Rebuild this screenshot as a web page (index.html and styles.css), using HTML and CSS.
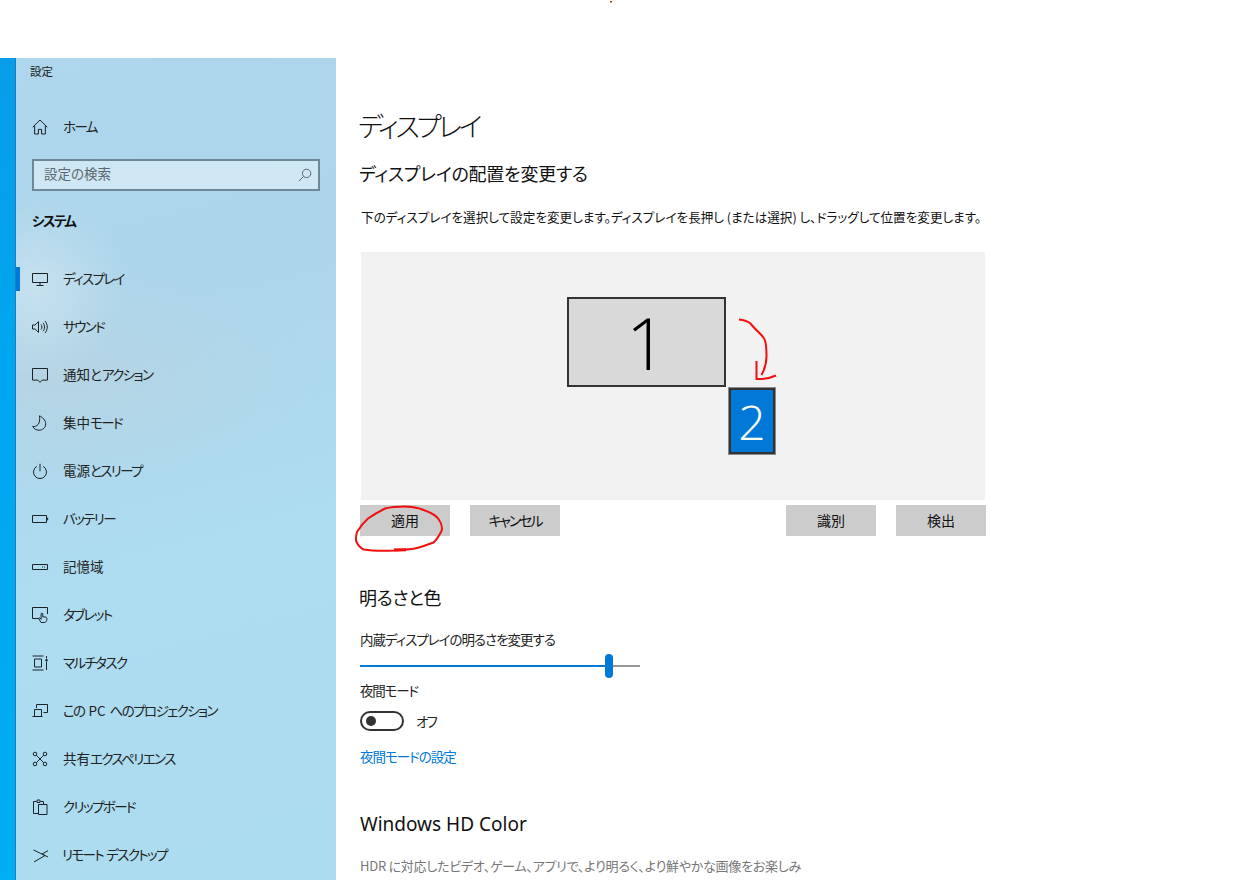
FILE: index.html
```html
<!DOCTYPE html>
<html lang="ja">
<head>
<meta charset="utf-8">
<title>設定</title>
<link rel="stylesheet" href="styles.css">
</head>
<body>
<div class="topgap"></div>
<div class="app">
  <div class="edge"></div>
  <aside class="sidebar">
    <div class="apptitle">設定</div>
    <div class="row home">
      <svg class="ic" viewBox="0 0 16 16"><path d="M.7 8.2 8 1l7.300 7.200M2.600 6.600V15h3.800v-4.600h3.200V15h3.800V6.600"/></svg>
      <span>ホーム</span>
    </div>
    <div class="search"><span>設定の検索</span>
      <svg class="searchic" viewBox="0 0 14 14"><circle cx="8.600" cy="5.400" r="4.200"/><path d="M5.600 8.400.8 13.200"/></svg>
    </div>
    <div class="section">システム</div>
    <nav class="nav">
      <div class="row active"><svg class="ic" viewBox="0 0 16 16"><path d="M.5 2.500h15v9H.5zM8 11.500V14M4.500 14.500h7"/></svg><span>ディスプレイ</span></div>
      <div class="row"><svg class="ic" viewBox="0 0 16 16"><path d="M.5 6h2.600L6.500 2.600v10.800L3.100 10H.5zM9 5.500c1.200 1.400 1.200 3.600 0 5M11 3.800c2 2.400 2 6 0 8.400M13 2c3 3.500 3 8.500 0 12"/></svg><span>サウンド</span></div>
      <div class="row"><svg class="ic" viewBox="0 0 16 16"><path d="M.5 1.500h15v11.600h-5.300L8 15.300l-2.200-2.200H.5z"/></svg><span><span class="k">通知と</span>アクション</span></div>
      <div class="row"><svg class="ic" viewBox="0 0 16 16"><path d="M7.500.8c2.800 1.400 6.200 4.200 6.200 8 0 3.600-3 6.400-6.600 6.400-3 0-5.400-1.500-6.400-3.800 4 .8 8-2.400 6.800-10.600z"/></svg><span><span class="k">集中</span>モード</span></div>
      <div class="row"><svg class="ic" viewBox="0 0 16 16"><path d="M8 .8v7.400M4.800 3.400a6.500 6.500 0 1 0 6.400 0"/></svg><span><span class="k">電源</span>とスリープ</span></div>
      <div class="row"><svg class="ic" viewBox="0 0 16 16"><path d="M.5 4.500h14v7H.5zM14.500 7h1.200v2h-1.200"/></svg><span>バッテリー</span></div>
      <div class="row"><svg class="ic" viewBox="0 0 16 16"><path d="M.5 5.500h15v5H.5zM10 8h1M12 8h1"/></svg><span class="k">記憶域</span></div>
      <div class="row"><svg class="ic" viewBox="0 0 16 16"><path d="M7 11.500H.5v-11h15v6.500M9 15.500 6.800 11.800c-.5-.9.700-1.500 1.300-.7l1 1.200V7c0-1.200 1.700-1.200 1.700 0v3h2.700c.8 0 1.300.6 1.300 1.300v1.400c0 1.500-1 2.800-2.500 2.800z"/></svg><span>タブレット</span></div>
      <div class="row"><svg class="ic" viewBox="0 0 16 16"><path d="M.5 1h11M.5 15h11M2.500 4h7v8h-7zM14.500 1v2.500M14.500 7v8"/><circle class="dot" cx="14.500" cy="5.300" r="1.200"/></svg><span>マルチタスク</span></div>
      <div class="row"><svg class="ic" viewBox="0 0 16 16"><path d="M4.500 5V1.500h11v8h-4M.5 13.500h10M2.500 13.500V6.500h7v7"/></svg><span>この<span class="k pc"> PC </span>へのプロジェクション</span></div>
      <div class="row"><svg class="ic" viewBox="0 0 16 16"><circle cx="3" cy="3" r="1.800"/><circle cx="13" cy="3" r="1.800"/><circle cx="3" cy="13" r="1.800"/><circle cx="13" cy="13" r="1.800"/><path d="m4.300 4.300 7.400 7.400M11.700 4.300l-7.400 7.400"/></svg><span><span class="k">共有</span>エクスペリエンス</span></div>
      <div class="row"><svg class="ic" viewBox="0 0 16 16"><path d="M6 14.500H1.500v-12h3M8.500 2.500h3v3M5 3.500V1h3v2.500zM6.500 5.500h8.500v10H6.500z"/></svg><span>クリップボード</span></div>
      <div class="row remote"><svg class="ic" viewBox="0 0 16 16"><path d="M1.500 3 13 8.500 2 15M16 3.700 10 7l6 3"/></svg><span>リモート<span class="k"> </span>デスクトップ</span></div>
    </nav>
  </aside>
  <main class="main">
    <h1 class="title">ディスプレイ</h1>
    <h2 class="subtitle">ディスプレイの配置を変更する</h2>
    <p class="desc">下のディスプレイを選択して設定を変更します。ディスプレイを長押し (または選択) し、ドラッグして位置を変更します。</p>
    <div class="stage">
      <div class="mon mon1">1</div>
      <div class="mon mon2">2</div>
    </div>
    <div class="buttons">
      <div class="btn">適用</div>
      <div class="btn kana">キャンセル</div>
      <div class="spacer"></div>
      <div class="btn">識別</div>
      <div class="btn">検出</div>
    </div>
    <h2 class="subtitle sub2">明るさと色</h2>
    <div class="label lb1">内蔵ディスプレイの明るさを変更する</div>
    <div class="slider"><div class="fill"></div><div class="thumb"></div><div class="rest"></div></div>
    <div class="label lb2">夜間モード</div>
    <div class="toggleline"><div class="toggle"><div class="knob"></div></div><span>オフ</span></div>
    <a class="link">夜間モードの設定</a>
    <h2 class="hd">Windows HD Color</h2>
    <p class="hdr">HDR に対応したビデオ、ゲーム、アプリで、より明るく、より鮮やかな画像をお楽しみいただけます。</p>
  </main>
</div>
<svg class="ink" viewBox="0 0 1242 880">
  <path d="M610 1h2v1.500h-2z" class="inkdot"/>
  <path d="M739 319.500c4 .5 8 1.500 11 3.500 2.500 3 5 6 8 8.500 3 3.500 6 5.500 7 9 1.500 5 1.500 11 1.500 16 0 6-2 13-5 18.500"/>
  <path d="M756.500 361v18c7 .5 13-.5 19.500-3.500"/>
  <path d="M438.500 519c-3-4-8-6.500-13.500-8.500-6-2.500-13-4-20-4-7 0-14 .5-20 2-6 3-12 6.500-17 10-4.500 4-8 8.500-11 13.500-1 3.500-1.500 7-.5 10 1.500 3 4 6 7 7.500 9 1.500 21 1.500 32 1 7-.5 15-1 21.500-2.500 6-1.500 11-3.500 16.500-5.500 3.500-3 6-7.500 8-11.500 1-3.500 0-8-3-12z"/>
  <path d="M394 549.800h12" class="inkthick"/>
</svg>
</body>
</html>
```
FILE: styles.css
```css
* { box-sizing: border-box; }
html, body { margin: 0; height: 880px; overflow: hidden; background: #fff; }
body {
  position: relative;
  font-family: "Noto Sans CJK JP", "Noto Sans", sans-serif;
  color: #111;
  font-feature-settings: "palt";
}
.topgap { height: 58px; }
.app { display: flex; height: 822px; overflow: hidden; }
.edge {
  width: 16px;
  background: linear-gradient(180deg, #0a9ce8 0%, #00a5ef 35%, #00aef2 100%);
  border-right: 1px solid #1a7fb5;
}
.sidebar {
  width: 320px;
  padding-left: 16px;
  background:
    radial-gradient(circle at 20px 230px, #c6e1ee 0, rgba(198,225,238,0) 90px),
    radial-gradient(ellipse 260px 120px at 50px 320px, rgba(190,210,220,.5) 0, rgba(190,210,220,0) 100%),
    linear-gradient(165deg, #aed6ec 0%, #acd5eb 30%, #aedcf0 60%, #acdcf0 100%);
}
.apptitle { height: 26px; line-height: 26px; font-size: 11.500px; color: #222; margin-left: -2px; }
.row {
  height: 48px;
  display: flex;
  align-items: center;
  gap: 15px;
  font-size: 13.500px;
  color: #222;
  position: relative;
  letter-spacing: -1.600px;
}
.row > span { margin-top: -2px; }
.k { letter-spacing: 0; }
.pc { word-spacing: 1px; }
.home { margin-top: 19px; }
.ic { width: 16px; height: 16px; flex: none; fill: none; stroke: #1c2328; stroke-width: 1; overflow: visible; }
.ic .dot { fill: #1c2328; stroke: none; }
.search {
  width: 288px;
  height: 32px;
  margin-top: 8px;
  border: 2px solid #6d8899;
  background: rgba(255,255,255,.42);
  display: flex;
  align-items: center;
  justify-content: space-between;
  padding: 0 6px 0 10px;
  font-size: 13.500px;
  color: #5b6770;
}
.search span { margin-top: -5px; }
.searchic { width: 14px; height: 14px; fill: none; stroke: #5b6770; stroke-width: 1; }
.section { height: 44px; line-height: 42px; margin-top: 8px; font-size: 13.500px; font-weight: 700; color: #111; letter-spacing: -1.600px; }
.nav { margin-top: 12px; }
.active::before {
  content: "";
  position: absolute;
  left: -16px;
  top: 12px;
  width: 4px;
  height: 24px;
  background: #0078d7;
}
.remote { gap: 14px; }
.main { flex: 1; padding-left: 24px; }
.title { margin: 46px 0 0 -2px; height: 44px; line-height: 44px; font-size: 27px; font-weight: 300; color: #111; letter-spacing: -3.300px; }
.subtitle { margin: 12px 0 0 -1px; height: 28px; line-height: 26px; font-size: 18px; font-weight: 400; color: #111; letter-spacing: -.250px; }
.desc { margin: 19px 0 0 1px; height: 20px; line-height: 20px; font-size: 12.600px; color: #111; white-space: nowrap; }
.stage { position: relative; margin: 25px 0 0 1px; width: 624px; height: 248px; background: #f2f2f2; }
.mon {
  position: absolute;
  display: flex;
  align-items: center;
  justify-content: center;
  font-family: "Open Sans", sans-serif;
  font-weight: 300;
}
.mon1 { left: 206px; top: 45px; width: 159px; height: 90px; border: 2px solid #333; background: #d9d9d9; color: #000; font-size: 72px; }
.mon2 { left: 368px; top: 136px; width: 46px; height: 66px; border: 2px solid #333; outline: 1px solid #8a8a8a; background: #0078d7; color: #fff; font-size: 48px; }
.buttons { display: flex; gap: 20px; width: 626px; margin-top: 5px; }
.btn { width: 90px; height: 31px; line-height: 30px; background: #ccc; text-align: center; font-size: 14px; color: #111; }
.kana { letter-spacing: -2.100px; }
.spacer { flex: 1; }
.sub2 { margin-top: 48px; letter-spacing: -.400px; }
.label { font-size: 13.500px; height: 22px; line-height: 20px; color: #222; letter-spacing: -1px; }
.lb1 { margin-top: 17px; }
.slider { display: flex; align-items: center; width: 280px; height: 24px; margin-top: 3px; }
.fill { width: 245px; height: 2px; background: #0078d7; }
.thumb { width: 8px; height: 24px; border-radius: 4px; background: #0078d7; }
.rest { flex: 1; height: 2px; background: #999; }
.lb2 { margin-top: 2px; letter-spacing: -1.200px; }
.toggleline { display: flex; align-items: center; gap: 12px; margin-top: 9px; height: 20px; font-size: 13.500px; color: #222; letter-spacing: -2px; }
.toggle { width: 44px; height: 20px; border: 2px solid #333; border-radius: 10px; padding: 3px 0 0 4px; }
.knob { width: 10px; height: 10px; border-radius: 50%; background: #333; }
.link { display: block; margin-top: 15px; height: 22px; line-height: 20px; font-size: 13.500px; color: #0078d7; letter-spacing: -1px; }
.hd { margin: 41px 0 0; height: 30px; line-height: 30px; font-family: "Noto Sans", sans-serif; font-size: 19px; font-weight: 400; color: #111; }
.hdr { margin: 17px 0 0; width: 448px; font-size: 13px; line-height: 20px; color: #767676; letter-spacing: -.250px; }
.ink { position: absolute; left: 0; top: 0; width: 1242px; height: 880px; fill: none; stroke: #f01010; stroke-width: 2; pointer-events: none; }
.ink .inkdot { fill: #e02020; stroke: none; }
.ink .inkthick { stroke-width: 3; }
```
